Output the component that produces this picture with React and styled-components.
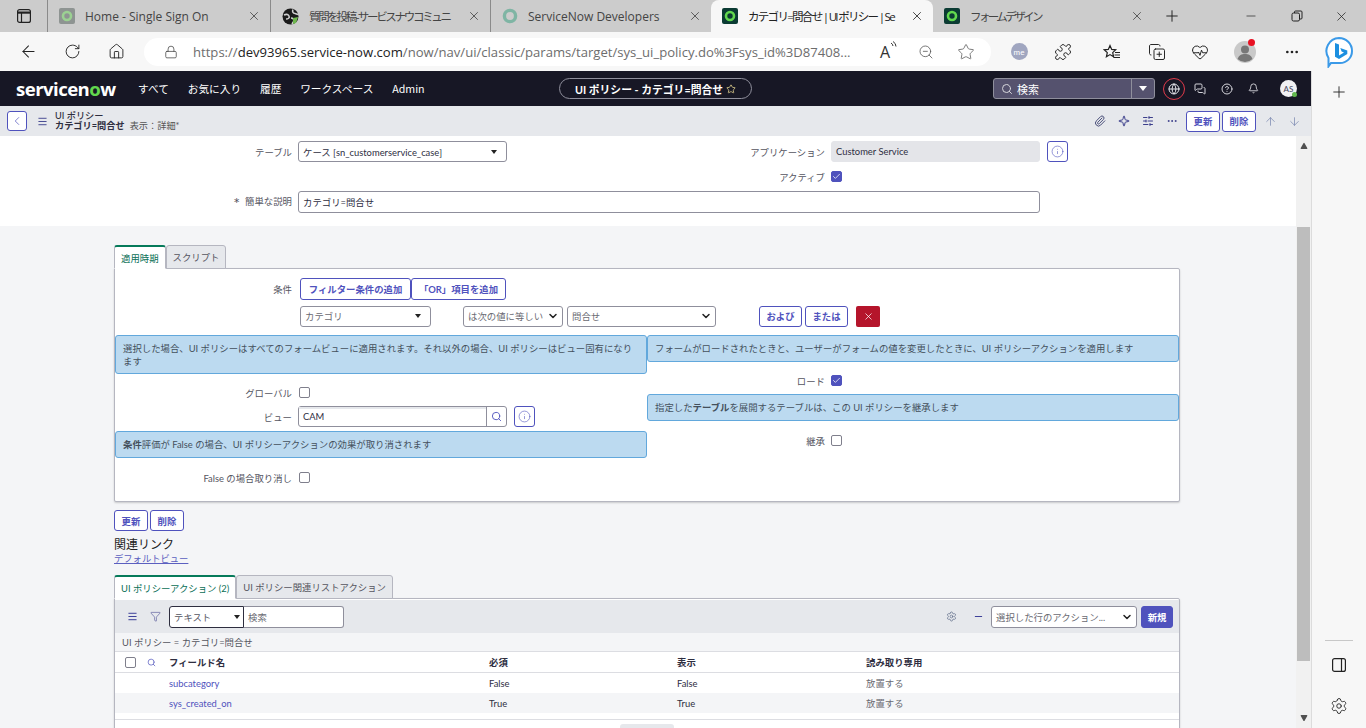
import React from 'react'
import styled, { createGlobalStyle } from 'styled-components'
import {
  ArrowLeft, RotateCw, House, Lock, ZoomOut, Star, Puzzle, Ellipsis, Plus, Minus, X, Search, Globe,
  MessagesSquare, CircleHelp, Bell, ChevronLeft, Menu, Paperclip, Sparkle, SlidersHorizontal, ArrowUp,
  ArrowDown, Info, Funnel, Settings, Check, ChevronDown, CopyPlus, HeartPulse, Triangle,
} from 'lucide-react'

const GlobalStyle = createGlobalStyle`
  html, body { margin: 0; height: 100%; overflow: hidden; }
  body { font-family: Lato, "Noto Sans CJK JP", sans-serif; font-size: 9.4px; color: #2e2e3f; }
  * { box-sizing: border-box; }
`

const Page = styled.div`
  width: 1366px;
  height: 728px;
  display: flex;
  flex-direction: column;
  overflow: hidden;
`

/* browser chrome */
const TabStrip = styled.div`
  height: 32px;
  flex: none;
  display: flex;
  align-items: stretch;
  background: #cccccc;
  font-family: "Open Sans", "Noto Sans CJK JP", sans-serif;
  font-size: 12px;
  color: #333;
`
const TabActions = styled.div`
  width: 47px;
  display: flex;
  align-items: center;
  padding-left: 16px;
`
const Tab = styled.div`
  width: ${(p) => p.$w}px;
  display: flex;
  align-items: center;
  gap: 10px;
  padding: 0 9px 0 11px;
  background: ${(p) => (p.$active ? '#f7f7f7' : 'transparent')};
  border-radius: ${(p) => (p.$active ? '8px 8px 0 0' : '0')};
  border-left: ${(p) => (p.$sep ? '1px solid #8a8a8a' : '0')};
  background-clip: ${(p) => (p.$sep ? 'padding-box' : 'border-box')};
  color: ${(p) => (p.$active ? '#222' : '#444')};
  svg { flex: none; }
`
const TabTitle = styled.span`
  flex: 1;
  white-space: nowrap;
  min-width: 0;
  font-size: ${(p) => (p.$ls ? '11.5px' : '12px')};
  letter-spacing: ${(p) => p.$ls || 0}px;
`
const WindowButtons = styled.div`
  flex: 1;
  display: flex;
  align-items: center;
  padding-left: 10px;
  color: #222;
`
const WinButton = styled.span`
  display: flex;
  margin-left: ${(p) => p.$ml || 0}px;
`
const AddressBar = styled.div`
  height: 39px;
  flex: none;
  background: #f7f7f7;
  display: flex;
  align-items: center;
  color: #222;
`
const NavIcon = styled.span`
  width: ${(p) => p.$w || 44}px;
  display: flex;
  justify-content: center;
  align-items: center;
  position: relative;
  flex: none;
`
const UrlPill = styled.div`
  width: 847px;
  height: 28px;
  margin: 0 6px 0 0;
  background: #fff;
  border-radius: 14px;
  display: flex;
  align-items: center;
  padding-left: 20px;
  font-family: "Open Sans", sans-serif;
  font-size: 13.1px;
  color: #6d6d6d;
  white-space: nowrap;
  flex: none;
`
const UrlHost = styled.span`
  color: #222;
`
const UrlText = styled.span`
  margin-left: 15px;
  width: 672px;
  overflow: hidden;
`
const ReadAloud = styled.span`
  font-family: "Open Sans", sans-serif;
  font-size: 16px;
  color: #333;
  margin-left: 15px;
  width: 30px;
  display: flex;
  align-items: flex-start;
`
const PillIcon = styled.span`
  display: flex;
  margin-left: ${(p) => p.$ml || 0}px;
`
const MeBadge = styled.span`
  width: 17px;
  height: 17px;
  border-radius: 50%;
  background: #a0a6c0;
  color: #fff;
  font-size: 8px;
  display: flex;
  align-items: center;
  justify-content: center;
`
const RedDot = styled.span`
  position: absolute;
  top: -2px;
  right: 10px;
  width: 7px;
  height: 7px;
  border-radius: 50%;
  background: #e81123;
`

const Body = styled.div`
  flex: 1;
  display: flex;
  min-height: 0;
`
const Main = styled.div`
  flex: 1;
  display: flex;
  flex-direction: column;
  min-width: 0;
`
const BrowserRail = styled.div`
  width: 55px;
  flex: none;
  background: #f7f7f7;
  border-left: 1px solid #dcdcdc;
  display: flex;
  flex-direction: column;
  align-items: center;
  padding-top: 12px;
  color: #222;
`
const RailRule = styled.div`
  width: 28px;
  height: 1px;
  background: #c8c8c8;
  margin-top: auto;
  margin-bottom: 16px;
`
const RailIcon = styled.span`
  display: flex;
  margin-bottom: ${(p) => p.$mb || 0}px;
`

/* servicenow header */
const AppHeader = styled.header`
  height: 35px;
  flex: none;
  background: #171725;
  display: flex;
  align-items: center;
  color: #fff;
  position: relative;
`
const Logo = styled.div`
  font-family: "Open Sans", sans-serif;
  font-weight: 700;
  font-size: 18.6px;
  letter-spacing: -0.55px;
  margin-left: 16px;
  width: 122px;
  flex: none;
  span { color: #62d84e; }
`
const NavLink = styled.span`
  font-family: "Noto Sans CJK JP", sans-serif;
  font-size: 10.7px;
  margin-right: 18.8px;
  white-space: nowrap;
`
const ContextPill = styled.div`
  position: absolute;
  left: 559px;
  width: 193px;
  height: 21px;
  border: 1px solid #8f8f9c;
  border-radius: 11px;
  display: flex;
  align-items: center;
  justify-content: center;
  gap: 3px;
  font-weight: 700;
  font-size: 10.8px;
  white-space: nowrap;
`
const HeaderRight = styled.div`
  margin-left: auto;
  display: flex;
  align-items: center;
  margin-right: 14px;
`
const GlobalSearch = styled.div`
  width: 162px;
  height: 21px;
  background: #55526e;
  border: 1px solid #8f8f9c;
  border-radius: 3px;
  display: flex;
  align-items: center;
  padding-left: 7px;
  font-size: 11px;
  gap: 4px;
  color: #fff;
`
const SearchCaret = styled.span`
  margin-left: auto;
  width: 23px;
  height: 100%;
  border-left: 1px solid #8f8f9c;
  display: flex;
  align-items: center;
  justify-content: center;
  &::after {
    content: '';
    border: 4px solid transparent;
    border-top: 5px solid #fff;
    border-bottom: 0;
  }
`
const GlobeRing = styled.span`
  width: 22px;
  height: 22px;
  border: 1px solid #e03a4a;
  border-radius: 50%;
  display: flex;
  align-items: center;
  justify-content: center;
  margin: 0 1px 0 8px;
`
const HeaderIcon = styled.span`
  display: flex;
  width: 27px;
  justify-content: center;
  color: #d6d6dc;
`
const Avatar = styled.span`
  width: 17px;
  height: 17px;
  margin-left: 13px;
  border-radius: 50%;
  background: #f1f1f3;
  color: #44445a;
  font-size: 8px;
  display: flex;
  align-items: center;
  justify-content: center;
  position: relative;
  &::after {
    content: '';
    position: absolute;
    right: 0;
    bottom: 0;
    width: 5px;
    height: 5px;
    border-radius: 50%;
    background: #62b84e;
  }
`

/* form header */
const FormHeader = styled.div`
  height: 30px;
  flex: none;
  background: #e6e8ec;
  display: flex;
  align-items: center;
  padding: 0 5px 0 7px;
  color: #2e2e3f;
`
const BackButton = styled.span`
  width: 20px;
  height: 20px;
  background: #fff;
  border: 1px solid #4f52bd;
  border-radius: 3px;
  display: flex;
  align-items: center;
  justify-content: center;
  color: #4f52bd;
`
const HeaderTitle = styled.div`
  margin-left: -2px;
  margin-top: -1px;
  line-height: 10px;
  font-size: 9.2px;
  font-weight: 500;
`
const ViewTag = styled.span`
  font-weight: 400;
  color: #555;
  margin-left: 5px;
`
const ToolIcon = styled.span`
  display: flex;
  width: ${(p) => p.$w || 24}px;
  justify-content: center;
  color: ${(p) => p.$c || '#3c3f8c'};
  margin-left: ${(p) => p.$ml || '0'};
`
const ButtonRow = styled.div`
  display: flex;
  gap: ${(p) => p.$gap ?? 2}px;
  align-items: center;
  margin-left: ${(p) => p.$ml || 0}px;
`
const Button = styled.button`
  height: ${(p) => p.$h || 21}px;
  padding: 0 6px;
  width: ${(p) => (p.$w ? `${p.$w}px` : 'auto')};
  margin-left: ${(p) => p.$ml || 0}px;
  border: 1px solid #4f52bd;
  border-radius: 3px;
  background: ${(p) => (p.$primary ? '#4f52bd' : '#fff')};
  color: ${(p) => (p.$primary ? '#fff' : '#4f52bd')};
  font-family: inherit;
  font-size: 9.4px;
  font-weight: 700;
  white-space: nowrap;
  display: flex;
  align-items: center;
  justify-content: center;
`

/* page */
const ScrollArea = styled.div`
  flex: 1;
  display: flex;
  min-height: 0;
`
const Content = styled.div`
  flex: 1;
  min-width: 0;
  overflow: hidden;
  background: #f4f5f7;
`
const Scrollbar = styled.div`
  width: 15px;
  flex: none;
  background: #f1f1f1;
  display: flex;
  flex-direction: column;
  align-items: center;
  color: #505050;
  padding-top: 6px;
`
const ScrollThumb = styled.div`
  width: 13px;
  height: 434px;
  margin-top: 77px;
  background: #bdbdbd;
`
const ScrollDown = styled.span`
  margin-top: auto;
  margin-bottom: 6px;
  display: flex;
  transform: rotate(180deg);
`
const TopSection = styled.div`
  height: 90px;
  background: #fff;
  padding-top: 5px;
`
const TopGrid = styled.div`
  display: flex;
`
const Column = styled.div`
  width: ${(p) => p.$w}px;
  flex: none;
  display: flex;
  flex-direction: column;
`
const Field = styled.div`
  display: flex;
  align-items: center;
  height: ${(p) => p.$h || 21}px;
  margin-top: ${(p) => p.$mt || 0}px;
`
const Label = styled.label`
  width: ${(p) => p.$w}px;
  flex: none;
  text-align: right;
  color: #55555f;
  margin-right: 6px;
  white-space: nowrap;
`
const Required = styled.span`
  color: #55555f;
  font-size: 16px;
  line-height: 1;
  margin-right: 5px;
  vertical-align: -4px;
`
const Control = styled.div`
  width: ${(p) => p.$w}px;
  height: ${(p) => p.$h || 21}px;
  flex: none;
  background: ${(p) => (p.$readonly ? '#e4e5e9' : '#fff')};
  border: 1px solid ${(p) => (p.$readonly ? '#e4e5e9' : '#8f8f9c')};
  border-radius: 3px;
  display: flex;
  align-items: center;
  padding-left: 4px;
  color: ${(p) => (p.$dim ? '#6a6a72' : '#2e2e3f')};
  white-space: nowrap;
  overflow: hidden;
`
const Caret = styled.span`
  margin-left: auto;
  margin-right: ${(p) => p.$mr || 9}px;
  border: 3px solid transparent;
  border-top: 4px solid #222;
  border-bottom: 0;
`
const ChevronSlot = styled.span`
  margin-left: auto;
  margin-right: 3px;
  display: flex;
  color: #222;
`
const InfoButton = styled.span`
  width: 21px;
  height: 21px;
  margin-left: 7px;
  background: #fff;
  border: 1px solid #4f52bd;
  border-radius: 3px;
  display: flex;
  align-items: center;
  justify-content: center;
  color: #4f52bd;
`
const CheckBox = styled.span`
  width: 11px;
  height: 11px;
  flex: none;
  margin-left: ${(p) => p.$ml || 0}px;
  border-radius: 2px;
  background: ${(p) => (p.$on ? '#4f52bd' : '#fff')};
  border: 1px solid ${(p) => (p.$on ? '#4f52bd' : '#7f7f8c')};
  color: #fff;
  display: flex;
  align-items: center;
  justify-content: center;
`

const Section = styled.div`
  padding: 19px 116px 0 114px;
`
const Tabs = styled.div`
  display: flex;
  height: 24px;
  margin-bottom: -1px;
  position: relative;
`
const TabButton = styled.div`
  height: 24px;
  padding: 0 6px;
  display: flex;
  align-items: center;
  white-space: nowrap;
  border: 1px solid #b5b6c0;
  border-radius: 3px 3px 0 0;
  border-top: ${(p) => (p.$active ? '2px solid #067a5a' : '1px solid #b5b6c0')};
  border-bottom: ${(p) => (p.$active ? '1px solid #fff' : '1px solid #b5b6c0')};
  background: ${(p) => (p.$active ? '#fff' : '#e6e8ec')};
  color: ${(p) => (p.$active ? '#0a6f56' : '#55555f')};
`
const Panel = styled.div`
  background: #fff;
  border: 1px solid #b5b6c0;
  border-radius: 0 2px 2px 2px;
  box-shadow: 0 1px 2px rgba(0, 0, 0, 0.18);
`
const RulesPanel = styled(Panel)`
  height: 234px;
  padding-top: 9px;
`
const ConditionLine = styled.div`
  display: flex;
  align-items: center;
  height: 22px;
  margin-bottom: ${(p) => p.$mb || 0}px;
`
const ConditionControls = styled.div`
  margin-left: 185px;
  display: flex;
  gap: 4px;
  align-items: center;
`
const SpacedControl = styled(Control)`
  margin-right: 28px;
`
const RuleActions = styled.div`
  display: flex;
  gap: 3px;
  margin-left: 43px;
`
const DangerButton = styled.span`
  width: 24px;
  height: 21px;
  margin-left: 5px;
  background: #b5152b;
  border-radius: 2px;
  color: #fff;
  display: flex;
  align-items: center;
  justify-content: center;
`
const RuleGrid = styled.div`
  display: grid;
  grid-template-columns: 532px 532px;
  margin-top: 8px;
`
const Note = styled.div`
  background: #bcdaf0;
  border: 1px solid #62a8dc;
  border-radius: 3px;
  padding: 6px 7px 5px;
  margin-top: ${(p) => p.$mt || 0}px;
  line-height: 13px;
  color: #44505c;
  min-height: 27px;
`
const LookupControl = styled(Control)`
  overflow: visible;
  padding: 0;
`
const LookupInput = styled.div`
  flex: 1;
  height: 100%;
  padding-left: 4px;
  display: flex;
  align-items: center;
  box-shadow: inset 0 2px 0 #e6e8ec;
  color: #2e2e3f;
`
const LookupButton = styled.span`
  width: 20px;
  height: 100%;
  border-left: 1px solid #8f8f9c;
  display: flex;
  align-items: center;
  justify-content: center;
  color: #4f52bd;
`
const FooterButtons = styled(ButtonRow)`
  margin-top: 8px;
`
const RelatedTitle = styled.div`
  font-family: "Noto Sans CJK JP", sans-serif;
  font-size: 12px;
  margin-top: 4px;
  line-height: 18px;
  color: #222;
`
const DefaultLink = styled.a`
  display: inline-block;
  color: #5b5fc0;
  font-size: 9.3px;
  line-height: 12px;
  text-decoration: underline;
  margin-bottom: 10px;
`
const ListToolbar = styled.div`
  height: 33px;
  margin-top: 1px;
  background: #e6e8ec;
  display: flex;
  align-items: center;
  padding: 0 6px 0 7px;
`
const FilterLine = styled.div`
  height: 19px;
  background: #f4f5f7;
  border-bottom: 1px solid #dcdde2;
  padding-left: 7px;
  line-height: 19px;
  color: #55555f;
`
const ToolGlyph = styled.span`
  display: flex;
  width: ${(p) => p.$w || 24}px;
  justify-content: center;
  margin-left: ${(p) => p.$ml || '0'};
  color: ${(p) => p.$c || '#2e3192'};
`
const ListSelect = styled(Control)`
  border-color: #2e2e3f;
  border-radius: 3px 0 0 3px;
  color: #55555f;
  height: 22px;
`
const ListSearch = styled(Control)`
  border-left: 0;
  border-radius: 0 3px 3px 0;
  color: #6a6a72;
  height: 22px;
`
const RowGrid = styled.div`
  display: grid;
  grid-template-columns: 54px 320px 188px 189px 1fr;
  align-items: center;
  height: ${(p) => p.$h || 20}px;
  background: ${(p) => (p.$alt ? '#f4f5f7' : '#fff')};
  border-bottom: ${(p) => (p.$line ? '1px solid #dcdde2' : '0')};
  font-weight: ${(p) => (p.$head ? 700 : 400)};
`
const SelectCell = styled.div`
  display: flex;
  align-items: center;
  padding-left: 10px;
  gap: 11px;
  color: #5b5fc0;
`
const FieldLink = styled.span`
  color: #4f52bd;
`
const MutedCell = styled.span`
  color: #6a6a72;
`
const ListFooter = styled.div`
  height: 30px;
  margin-top: 6px;
  border-top: 1px solid #dcdde2;
  display: flex;
  justify-content: center;
  padding-top: 4px;
`
const Pager = styled.span`
  width: 54px;
  height: 12px;
  border-radius: 3px;
  background: #e6e8ec;
`

const NowMark = ({ faded }) => (
  <svg width="16" height="16" viewBox="0 0 16 16" opacity={faded ? 0.45 : 1}>
    <rect width="16" height="16" rx="2" fill={faded ? '#45524c' : '#0b3b33'} />
    <circle cx="8" cy="8" r="4" fill="none" stroke="#62d84e" strokeWidth="2.6" />
  </svg>
)
const TealMark = () => (
  <svg width="16" height="16" viewBox="0 0 16 16">
    <circle cx="8" cy="8" r="5.6" fill="none" stroke="#7fb5a4" strokeWidth="3.4" />
  </svg>
)
const CommunityMark = () => (
  <svg width="17" height="17" viewBox="0 0 17 17">
    <circle cx="8.5" cy="8.5" r="8" fill="#1a1a1a" />
    <path d="M2 7c2-1 4-1 5 1s-1 3-3 3M11 1.5c-1 2 0 4 2 4l3 1M9 10c2 0 3 1 3 3l-2 3" stroke="#cfcfcf" strokeWidth="1.6" fill="none" />
    <path d="M11 10l5-1-2 6-3 1z" fill="#6fb84e" />
  </svg>
)
const TabPanels = () => (
  <svg width="16" height="16" viewBox="0 0 16 16" fill="none" stroke="#222" strokeWidth="1.2">
    <rect x="1.6" y="1.6" width="12.8" height="12.8" rx="2" />
    <path d="M1.6 4.6h12.8" strokeWidth="2.2" />
    <path d="M5.5 5v9" />
  </svg>
)
const Favorites = () => (
  <svg width="18" height="18" viewBox="0 0 18 18" fill="none" stroke="#222" strokeWidth="1.2">
    <path d="M7 2.5l1.7 3.9 4 .4-3 2.8.9 4.2L7 11.6l-3.6 2.2.9-4.2-3-2.8 4-.4z" />
    <path d="M12 9.5h5M11.5 12h5.5M10.5 14.5h6.5" />
  </svg>
)
const Bing = () => (
  <svg width="30" height="32" viewBox="0 0 30 32">
    <path d="M15 2a13 13 0 0 1 13 13c0 7-5.5 12-12 12H7l-2.5 3.4V22A13 13 0 0 1 15 2z" fill="#fff" stroke="#3b9ae8" strokeWidth="2" />
    <path d="M11 7l4 1.4v11l5-3-2.4-1-1.3-3.3 7 2.4v3.4l-8.3 5-4-2.2z" fill="#1b8fe0" />
  </svg>
)
const SidePane = () => (
  <svg width="16" height="16" viewBox="0 0 16 16" fill="none" stroke="#222" strokeWidth="1.2">
    <rect x="1.6" y="1.6" width="12.8" height="12.8" rx="2" />
    <path d="M10.5 1.6v12.8" />
  </svg>
)
const PersonAvatar = () => (
  <svg width="22" height="22" viewBox="0 0 22 22">
    <circle cx="11" cy="11" r="11" fill="#c9c9c9" />
    <circle cx="11" cy="8.5" r="4" fill="#777" />
    <path d="M3.5 18c1.5-4 4-5 7.5-5s6 1 7.5 5a11 11 0 0 1-15 0z" fill="#777" />
  </svg>
)
const RestoreIcon = () => (
  <svg width="12" height="12" viewBox="0 0 12 12" fill="none" stroke="#222">
    <rect x="1" y="3" width="7.5" height="8" rx="1.5" />
    <path d="M3.5 3V2a1 1 0 0 1 1-1H10a1 1 0 0 1 1 1v6a1 1 0 0 1-1 1H8.5" />
  </svg>
)
const AloudWaves = () => (
  <svg width="8" height="12" viewBox="0 0 8 12" fill="none" stroke="#333">
    <path d="M1 2a4 4 0 0 1 2 3M3 0.5a6 6 0 0 1 3 5" />
  </svg>
)
const SelectChevron = () => (
  <ChevronSlot>
    <ChevronDown size={12} strokeWidth={3} />
  </ChevronSlot>
)
const CloseTab = () => <X size={14} strokeWidth={1.4} />

const App = () => {
  return (
    <Page>
      <GlobalStyle />
      <TabStrip>
        <TabActions>
          <TabPanels />
        </TabActions>
        <Tab $w={223} $sep>
          <NowMark faded />
          <TabTitle>Home - Single Sign On</TabTitle>
          <CloseTab />
        </Tab>
        <Tab $w={220} $sep>
          <CommunityMark />
          <TabTitle $ls={-2.3}>質問を投稿 - サービスナウコミュニ</TabTitle>
          <CloseTab />
        </Tab>
        <Tab $w={221} $sep>
          <TealMark />
          <TabTitle>ServiceNow Developers</TabTitle>
          <CloseTab />
        </Tab>
        <Tab $w={222} $active>
          <NowMark />
          <TabTitle $ls={-1.7}>カテゴリ=問合せ | UI ポリシー | Se</TabTitle>
          <CloseTab />
        </Tab>
        <Tab $w={220}>
          <NowMark />
          <TabTitle $ls={-2.6}>フォームデザイン</TabTitle>
          <CloseTab />
        </Tab>
        <WindowButtons>
          <WinButton>
            <Plus size={18} strokeWidth={1.3} />
          </WinButton>
          <WinButton $ml={63}>
            <Minus size={14} strokeWidth={1.2} />
          </WinButton>
          <WinButton $ml={33}>
            <RestoreIcon />
          </WinButton>
          <WinButton $ml={31}>
            <X size={15} strokeWidth={1.2} />
          </WinButton>
        </WindowButtons>
      </TabStrip>
      <AddressBar>
        <NavIcon $w={56}>
          <ArrowLeft size={19} strokeWidth={1.3} />
        </NavIcon>
        <NavIcon $w={32}>
          <RotateCw size={17} strokeWidth={1.3} />
        </NavIcon>
        <NavIcon $w={56}>
          <House size={17} strokeWidth={1.3} />
        </NavIcon>
        <UrlPill>
          <Lock size={14} strokeWidth={1.3} color="#444" />
          <UrlText>
            https://<UrlHost>dev93965.service-now.com</UrlHost>/now/nav/ui/classic/params/target/sys_ui_policy.do%3Fsys_id%3D87408...
          </UrlText>
          <ReadAloud>
            A
            <AloudWaves />
          </ReadAloud>
          <PillIcon $ml={8}>
            <ZoomOut size={16} strokeWidth={1.2} color="#555" />
          </PillIcon>
          <PillIcon $ml={23}>
            <Star size={18} strokeWidth={1.2} />
          </PillIcon>
        </UrlPill>
        <NavIcon $w={44}>
          <MeBadge>me</MeBadge>
        </NavIcon>
        <NavIcon $w={44}>
          <Puzzle size={18} strokeWidth={1.3} />
        </NavIcon>
        <NavIcon $w={54}>
          <Favorites />
        </NavIcon>
        <NavIcon $w={36}>
          <CopyPlus size={18} strokeWidth={1.3} />
        </NavIcon>
        <NavIcon $w={50}>
          <HeartPulse size={18} strokeWidth={1.3} />
        </NavIcon>
        <NavIcon $w={40}>
          <PersonAvatar />
          <RedDot />
        </NavIcon>
        <NavIcon $w={54}>
          <Ellipsis size={16} />
        </NavIcon>
        <NavIcon $w={40}>
          <Bing />
        </NavIcon>
      </AddressBar>
      <Body>
        <Main>
          <AppHeader>
            <Logo>
              servicen<span>o</span>w
            </Logo>
            <NavLink>すべて</NavLink>
            <NavLink>お気に入り</NavLink>
            <NavLink>履歴</NavLink>
            <NavLink>ワークスペース</NavLink>
            <NavLink>Admin</NavLink>
            <ContextPill>
              UI ポリシー - カテゴリ=問合せ <Star size={10} color="#d9c98a" />
            </ContextPill>
            <HeaderRight>
              <GlobalSearch>
                <Search size={12} color="#d6d6dc" />
                検索
                <SearchCaret />
              </GlobalSearch>
              <GlobeRing>
                <Globe size={12} color="#e4e4ea" />
              </GlobeRing>
              <HeaderIcon>
                <MessagesSquare size={12} />
              </HeaderIcon>
              <HeaderIcon>
                <CircleHelp size={12} />
              </HeaderIcon>
              <HeaderIcon>
                <Bell size={11} />
              </HeaderIcon>
              <Avatar>AS</Avatar>
            </HeaderRight>
          </AppHeader>
          <FormHeader>
            <BackButton>
              <ChevronLeft size={14} strokeWidth={1.2} />
            </BackButton>
            <ToolIcon $w={30}>
              <Menu size={11} strokeWidth={2} />
            </ToolIcon>
            <HeaderTitle>
              UI ポリシー
              <br />
              <b>カテゴリ=問合せ</b>
              <ViewTag>表示：詳細*</ViewTag>
            </HeaderTitle>
            <ToolIcon $ml="auto" $c="#4a4f7a">
              <Paperclip size={12} />
            </ToolIcon>
            <ToolIcon>
              <Sparkle size={12} />
            </ToolIcon>
            <ToolIcon>
              <SlidersHorizontal size={12} />
            </ToolIcon>
            <ToolIcon>
              <Ellipsis size={12} />
            </ToolIcon>
            <ButtonRow $ml={2}>
              <Button $w={34}>更新</Button>
              <Button $w={34}>削除</Button>
            </ButtonRow>
            <ToolIcon $ml="2px" $c="#6b7aa8">
              <ArrowUp size={13} strokeWidth={1.2} />
            </ToolIcon>
            <ToolIcon $c="#6b7aa8">
              <ArrowDown size={13} strokeWidth={1.2} />
            </ToolIcon>
          </FormHeader>
          <ScrollArea>
            <Content>
              <TopSection>
                <TopGrid>
                  <Column $w={640}>
                    <Field>
                      <Label $w={292}>テーブル</Label>
                      <Control $w={209}>
                        ケース [sn_customerservice_case]
                        <Caret />
                      </Control>
                    </Field>
                  </Column>
                  <Column $w={440}>
                    <Field>
                      <Label $w={185}>アプリケーション</Label>
                      <Control $w={209} $readonly>
                        Customer Service
                      </Control>
                      <InfoButton>
                        <Info size={13} strokeWidth={1.1} />
                      </InfoButton>
                    </Field>
                    <Field $mt={4}>
                      <Label $w={185}>アクティブ</Label>
                      <CheckBox $on>
                        <Check size={9} strokeWidth={2} />
                      </CheckBox>
                    </Field>
                  </Column>
                </TopGrid>
                <Field $h={22} $mt={4}>
                  <Label $w={292}>
                    <Required>*</Required>簡単な説明
                  </Label>
                  <Control $w={742} $h={22}>
                    カテゴリ=問合せ
                  </Control>
                </Field>
              </TopSection>
              <Section>
                <Tabs>
                  <TabButton $active>適用時期</TabButton>
                  <TabButton>スクリプト</TabButton>
                </Tabs>
                <RulesPanel>
                  <ConditionLine $mb={5}>
                    <Label $w={177}>条件</Label>
                    <ButtonRow $ml={2} $gap={0}>
                      <Button $h={22} $w={111}>
                        フィルター条件の追加
                      </Button>
                      <Button $h={22} $w={95}>
                        「OR」項目を追加
                      </Button>
                    </ButtonRow>
                  </ConditionLine>
                  <ConditionLine>
                    <ConditionControls>
                      <SpacedControl $w={131} $dim>
                        カテゴリ
                        <Caret />
                      </SpacedControl>
                      <Control $w={100} $dim>
                        は次の値に等しい
                        <SelectChevron />
                      </Control>
                      <Control $w={149} $dim>
                        問合せ
                        <SelectChevron />
                      </Control>
                    </ConditionControls>
                    <RuleActions>
                      <Button $w={43}>および</Button>
                      <Button $w={43}>または</Button>
                      <DangerButton>
                        <X size={11} strokeWidth={1.6} />
                      </DangerButton>
                    </RuleActions>
                  </ConditionLine>
                  <RuleGrid>
                    <Column $w={532}>
                      <Note>
                        選択した場合、UI ポリシーはすべてのフォームビューに適用されます。それ以外の場合、UI ポリシーはビュー固有になります
                      </Note>
                      <Field $mt={8}>
                        <Label $w={177}>グローバル</Label>
                        <CheckBox $ml={1} />
                      </Field>
                      <Field $mt={3}>
                        <Label $w={177}>ビュー</Label>
                        <LookupControl $w={209}>
                          <LookupInput>CAM</LookupInput>
                          <LookupButton>
                            <Search size={11} />
                          </LookupButton>
                        </LookupControl>
                        <InfoButton>
                          <Info size={13} strokeWidth={1.1} />
                        </InfoButton>
                      </Field>
                      <Note $mt={4}>
                        <b>条件</b>評価が False の場合、UI ポリシーアクションの効果が取り消されます
                      </Note>
                      <Field $mt={9}>
                        <Label $w={177}>False の場合取り消し</Label>
                        <CheckBox $ml={1} />
                      </Field>
                    </Column>
                    <Column $w={532}>
                      <Note>
                        フォームがロードされたときと、ユーザーがフォームの値を変更したときに、UI ポリシーアクションを適用します
                      </Note>
                      <Field $mt={8}>
                        <Label $w={178}>ロード</Label>
                        <CheckBox $on>
                          <Check size={9} strokeWidth={2} />
                        </CheckBox>
                      </Field>
                      <Note $mt={3}>
                        指定した<b>テーブル</b>を展開するテーブルは、この UI ポリシーを継承します
                      </Note>
                      <Field $mt={9}>
                        <Label $w={178}>継承</Label>
                        <CheckBox />
                      </Field>
                    </Column>
                  </RuleGrid>
                </RulesPanel>
                <FooterButtons>
                  <Button $w={34}>更新</Button>
                  <Button $w={34}>削除</Button>
                </FooterButtons>
                <RelatedTitle>関連リンク</RelatedTitle>
                <DefaultLink>デフォルトビュー</DefaultLink>
                <Tabs>
                  <TabButton $active>UI ポリシーアクション (2)</TabButton>
                  <TabButton>UI ポリシー関連リストアクション</TabButton>
                </Tabs>
                <Panel>
                  <ListToolbar>
                    <ToolGlyph $w={20}>
                      <Menu size={11} strokeWidth={2} />
                    </ToolGlyph>
                    <ToolGlyph $w={27} $c="#3c3f8c">
                      <Funnel size={11} strokeWidth={1.2} />
                    </ToolGlyph>
                    <ListSelect $w={75}>
                      テキスト
                      <Caret $mr={3} />
                    </ListSelect>
                    <ListSearch $w={100}>検索</ListSearch>
                    <ToolGlyph $w={28} $ml="auto" $c="#4a5a7a">
                      <Settings size={11} strokeWidth={1.3} />
                    </ToolGlyph>
                    <ToolGlyph $w={26}>
                      <Minus size={11} />
                    </ToolGlyph>
                    <Control $w={146} $h={22} $dim>
                      選択した行のアクション...
                      <SelectChevron />
                    </Control>
                    <Button $primary $w={32} $h={22} $ml={4}>
                      新規
                    </Button>
                  </ListToolbar>
                  <FilterLine>UI ポリシー = カテゴリ=問合せ</FilterLine>
                  <RowGrid $h={21} $head $line>
                    <SelectCell>
                      <CheckBox />
                      <Search size={9} />
                    </SelectCell>
                    <span>フィールド名</span>
                    <span>必須</span>
                    <span>表示</span>
                    <span>読み取り専用</span>
                  </RowGrid>
                  <RowGrid>
                    <span />
                    <FieldLink>subcategory</FieldLink>
                    <span>False</span>
                    <span>False</span>
                    <MutedCell>放置する</MutedCell>
                  </RowGrid>
                  <RowGrid $alt>
                    <span />
                    <FieldLink>sys_created_on</FieldLink>
                    <span>True</span>
                    <span>True</span>
                    <MutedCell>放置する</MutedCell>
                  </RowGrid>
                  <ListFooter>
                    <Pager />
                  </ListFooter>
                </Panel>
              </Section>
            </Content>
            <Scrollbar>
              <Triangle size={8} fill="#505050" strokeWidth={0} />
              <ScrollThumb />
              <ScrollDown>
                <Triangle size={8} fill="#505050" strokeWidth={0} />
              </ScrollDown>
            </Scrollbar>
          </ScrollArea>
        </Main>
        <BrowserRail>
          <RailIcon>
            <Plus size={18} strokeWidth={1.2} />
          </RailIcon>
          <RailRule />
          <RailIcon $mb={24}>
            <SidePane />
          </RailIcon>
          <RailIcon $mb={13}>
            <Settings size={18} strokeWidth={1.2} />
          </RailIcon>
        </BrowserRail>
      </Body>
    </Page>
  )
}

export default App
